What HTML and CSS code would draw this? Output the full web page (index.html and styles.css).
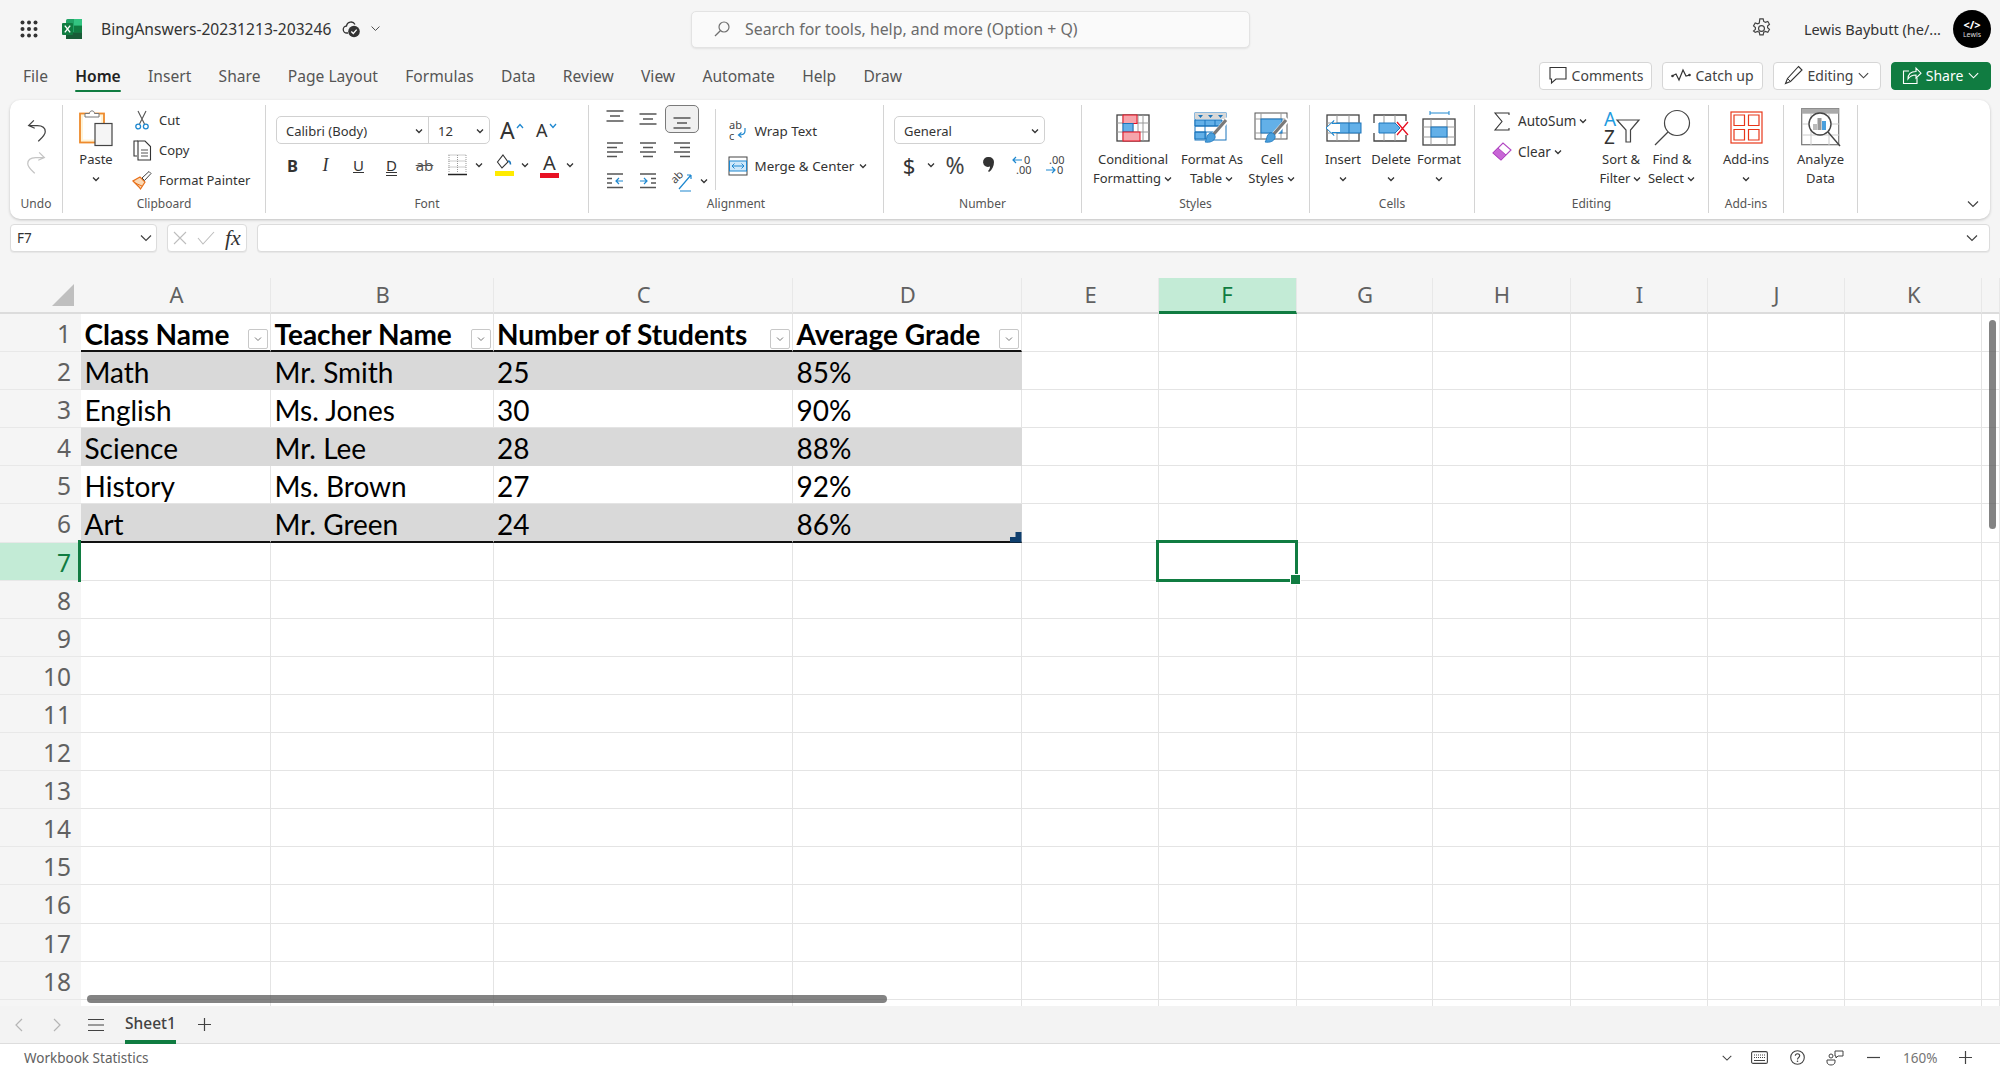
FILE: index.html
```html
<!DOCTYPE html>
<html lang="en">
<head>
<meta charset="utf-8">
<title>BingAnswers-20231213-203246</title>
<link rel="stylesheet" href="styles.css">
</head>
<body>
<svg class="defs" width="0" height="0" aria-hidden="true">
  <symbol id="chev" viewBox="0 0 10 10"><path d="M2 3.5 5 6.5 8 3.5" fill="none" stroke="#333" stroke-width="1.3"/></symbol>
  <symbol id="chevl" viewBox="0 0 14 14"><path d="M2 4.5 7 9.5 12 4.5" fill="none" stroke="#424242" stroke-width="1.2"/></symbol>
  <symbol id="lines3" viewBox="0 0 18 12"><path d="M.5 1H17.5M4 6H14M.5 11H17.5" fill="none" stroke="#555" stroke-width="1.4"/></symbol>
  <symbol id="brush" viewBox="0 0 36 30"><path d="M17 25 34 6" stroke="#fff" stroke-width="5"/><path d="M19 22 32 7" stroke="#7a7a7a" stroke-width="3.2"/><path d="M16 20c3-1 6 2 5 5-1 3-5 5-10 4 2-2 1-7 5-9Z" fill="#4a9fdc" stroke="#1b75bb" stroke-width=".8"/></symbol>
</svg>

<header class="titlebar">
  <div class="title-left">
    <svg class="waffle" width="18" height="18" viewBox="0 0 18 18"><g fill="#333"><circle cx="2.5" cy="2.5" r="2"/><circle cx="9" cy="2.5" r="2"/><circle cx="15.5" cy="2.5" r="2"/><circle cx="2.5" cy="9" r="2"/><circle cx="9" cy="9" r="2"/><circle cx="15.5" cy="9" r="2"/><circle cx="2.5" cy="15.5" r="2"/><circle cx="9" cy="15.5" r="2"/><circle cx="15.5" cy="15.5" r="2"/></g></svg>
    <svg class="xl" width="20" height="20" viewBox="0 0 20 20"><rect x="4" width="16" height="20" rx="1.5" fill="#21a366"/><rect x="12" width="8" height="6.7" fill="#33c481"/><rect x="4" y="13.3" width="16" height="6.7" fill="#185c37"/><rect x="12" y="6.7" width="8" height="6.6" fill="#107c41"/><rect y="4" width="11" height="12" rx="1" fill="#107c41"/><path d="M2.8 6.6 8.2 13.4M8.2 6.6 2.8 13.4" stroke="#fff" stroke-width="1.4"/></svg>
    <span class="doc">BingAnswers-20231213-203246</span>
    <svg class="cloud" width="18" height="18" viewBox="0 0 18 18"><path d="M5 13H4a3.5 3.5 0 0 1-.5-7A4.5 4.5 0 0 1 12 4.5" fill="none" stroke="#333" stroke-width="1.3"/><circle cx="11" cy="11.5" r="5.8" fill="#333"/><path d="M8.3 11.5 10.3 13.5 13.7 9.6" fill="none" stroke="#fff" stroke-width="1.3"/></svg>
    <svg class="doc-chev" width="11" height="11"><use href="#chevl"/></svg>
  </div>
  <div class="search">
    <svg width="18" height="18" viewBox="0 0 18 18"><circle cx="11" cy="7" r="5" fill="none" stroke="#707070" stroke-width="1.2"/><path d="M7.3 10.7 2 16" stroke="#707070" stroke-width="1.3"/></svg>
    <span>Search for tools, help, and more (Option + Q)</span>
  </div>
  <div class="title-right">
    <svg width="21" height="21" viewBox="0 0 20 20"><path d="M8.4 1.5h3.2l.5 2.4 1.6.8 2.3-.9 1.6 2.8-1.8 1.6v1.7l1.8 1.6-1.6 2.8-2.3-.9-1.6.8-.5 2.4H8.4l-.5-2.4-1.6-.8-2.3.9L2.4 13l1.8-1.6V9.7L2.4 8.1 4 5.3l2.3.9 1.6-.8Z" fill="none" stroke="#424242" stroke-width="1.1" transform="translate(0 -.6)"/><circle cx="10" cy="10" r="2.8" fill="none" stroke="#424242" stroke-width="1.1"/></svg>
    <span class="user">Lewis Baybutt (he/...</span>
    <div class="avatar"><span class="av-code">&lt;/&gt;</span><span class="av-name">Lewis</span></div>
  </div>
</header>

<nav class="tabs">
  <span class="tab">File</span>
  <span class="tab active">Home</span>
  <span class="tab">Insert</span>
  <span class="tab">Share</span>
  <span class="tab">Page Layout</span>
  <span class="tab">Formulas</span>
  <span class="tab">Data</span>
  <span class="tab">Review</span>
  <span class="tab">View</span>
  <span class="tab">Automate</span>
  <span class="tab">Help</span>
  <span class="tab">Draw</span>
  <div class="actions">
    <button class="act w-comments"><svg width="20" height="20" viewBox="0 0 20 20"><path d="M2 2.5H18V14H8L3.5 18V14H2Z" fill="none" stroke="#333" stroke-width="1.1"/></svg>Comments</button>
    <button class="act w-catch"><svg width="20" height="14" viewBox="0 0 20 14"><path d="M1 8 5 6 8 12 12 2 15 8 19 7" fill="none" stroke="#333" stroke-width="1.2"/><circle cx="1.5" cy="8" r="1.3" fill="#333"/><circle cx="18.5" cy="7" r="1.3" fill="#333"/></svg>Catch up</button>
    <button class="act w-edit"><svg width="20" height="22" viewBox="0 0 20 20"><path d="M14.5 1.5 18 5 6.5 16.5 1.5 18.5 3.5 13.5Z" fill="none" stroke="#333" stroke-width="1.1"/><path d="M3.5 13.5 6.5 16.5" stroke="#333"/></svg>Editing<svg width="13" height="13"><use href="#chevl"/></svg></button>
    <button class="act share"><svg width="20" height="20" viewBox="0 0 20 20"><path d="M7 6H1.5V18.5H15V13" fill="none" stroke="#fff" stroke-width="1.1"/><path d="M6 14c0-5 3-7.5 8-7.5V3l5 5.2-5 5V10c-3.5 0-6 1-8 4Z" fill="none" stroke="#fff" stroke-width="1.1"/></svg>Share<svg class="white" width="13" height="13" viewBox="0 0 14 14"><path d="M2 4.5 7 9.5 12 4.5" fill="none" stroke="#fff" stroke-width="1.2"/></svg></button>
  </div>
</nav>

<section class="ribbon">
  <div class="group g-undo">
    <div class="body stack">
      <svg width="23" height="28" viewBox="0 0 26 32"><path d="M10 5 4 11 11 14M4 11H14C20 11 23 14 23 18 23 22 18 26 15 29" fill="none" stroke="#424242" stroke-width="1.4"/></svg>
      <svg width="23" height="28" viewBox="0 0 26 32"><path d="M16 5 22 11 15 14M22 11H12C6 11 3 14 3 18 3 22 8 26 11 29" fill="none" stroke="#c4c4c4" stroke-width="1.4"/></svg>
    </div>
    <div class="label">Undo</div>
  </div>

  <div class="group g-clip">
    <div class="body row">
      <div class="big w-paste">
        <div class="big-ico"><svg width="34" height="37" viewBox="0 0 34 37"><rect x="1" y="4.5" width="24" height="29" fill="#fff3d6" stroke="#ee8a2c" stroke-width="1.8"/><rect x="4" y="7.5" width="18" height="23" fill="#fff"/><path d="M6 8V4.5H10.5C10.5 1 15.5 1 15.5 4.5H20V8Z" fill="#fff" stroke="#777"/><rect x="16" y="14.5" width="17" height="22" fill="#f5f5f5" stroke="#444" stroke-width="1.2"/></svg></div>
        <div class="line">Paste</div>
        <div class="line"><svg width="10" height="10"><use href="#chev"/></svg></div>
      </div>
      <div class="smalls">
        <div class="small"><span class="sm-ico"><svg width="14" height="20" viewBox="0 0 14 20"><path d="M3 1 9.5 14M11 1 4.5 14" stroke="#555" stroke-width="1.1"/><circle cx="3.2" cy="16.5" r="2.4" fill="none" stroke="#1e88d0" stroke-width="1.3"/><circle cx="10.8" cy="16.5" r="2.4" fill="none" stroke="#1e88d0" stroke-width="1.3"/></svg></span>Cut</div>
        <div class="small"><span class="sm-ico"><svg width="20" height="21" viewBox="0 0 20 21"><path d="M6 1H2V16H5" fill="none" stroke="#333" stroke-width="1.1"/><path d="M6 20V1H13L18.5 6.5V20Z" fill="#fff" stroke="#333" stroke-width="1.1"/><path d="M9 10H16M9 13H16M9 16H16" stroke="#555"/></svg></span>Copy</div>
        <div class="small"><span class="sm-ico"><svg width="20" height="20" viewBox="0 0 20 20"><path d="M1 11 7 17 8.5 19 13 12 8 7Z" fill="#fbd9b5" stroke="#e8701a" stroke-width="1.2"/><path d="M3 13 10 16" stroke="#e8701a"/><path d="M10 8 17 1.5 19 3.5 12.5 10.5Z" fill="#fff" stroke="#444"/></svg></span>Format Painter</div>
      </div>
    </div>
    <div class="label">Clipboard</div>
  </div>

  <div class="group g-font">
    <div class="body col">
      <div class="tool-row">
        <div class="combo">
          <div class="combo-part w-fname"><span>Calibri (Body)</span><svg width="10" height="10"><use href="#chev"/></svg></div>
          <div class="combo-part w-fsize"><span>12</span><svg width="10" height="10"><use href="#chev"/></svg></div>
        </div>
        <span class="bigA">A<svg width="8" height="6" viewBox="0 0 8 6"><path d="M1 5 4 1.500 7 5" fill="none" stroke="#1e88d0" stroke-width="1.300"/></svg></span>
        <span class="smA">A<svg width="8" height="6" viewBox="0 0 8 6"><path d="M1 1 4 4.500 7 1" fill="none" stroke="#1e88d0" stroke-width="1.300"/></svg></span>
      </div>
      <div class="tool-row second">
        <span class="tool t33 fb">B</span>
        <span class="tool t33 fi">I</span>
        <span class="tool t33 fu">U</span>
        <span class="tool t33 fd">D</span>
        <span class="tool t33 fs">ab</span>
        <span class="tool t32"><svg width="19" height="22" viewBox="0 0 19 22"><path d="M.5 1H18.500M.5 7H18.5M.5 13H18.5M1 1V19M9.500 1V19M18 1V19" fill="none" stroke="#999" stroke-dasharray="1 1"/><path d="M0 20.500H19" stroke="#222" stroke-width="1.500"/></svg></span>
        <span class="tool t12"><svg width="10" height="10"><use href="#chev"/></svg></span>
        <span class="tool t19 ml10"><svg width="19" height="22" viewBox="0 0 19 22"><path d="M8 1 13 8 7 14 2.500 8Z" fill="none" stroke="#333" stroke-width="1.1"/><path d="M13 7c1.500 0 2.500 1.500 2.500 3.500" fill="none" stroke="#1b75bb" stroke-width="1.500"/><rect y="17" width="19" height="5" fill="#ffeb00"/></svg></span>
        <span class="tool t22"><svg width="10" height="10"><use href="#chev"/></svg></span>
        <span class="tool t19 ml4 fa">A<i class="redbar"></i></span>
        <span class="tool t22"><svg width="10" height="10"><use href="#chev"/></svg></span>
      </div>
    </div>
    <div class="label">Font</div>
  </div>

  <div class="group g-align">
    <div class="body row">
      <div class="align-grid">
        <span class="tool ag vtop"><svg width="18" height="12"><use href="#lines3"/></svg></span>
        <span class="tool ag"><svg width="18" height="12"><use href="#lines3"/></svg></span>
        <span class="tool ag sel"><svg width="18" height="12"><use href="#lines3"/></svg></span>
        <span></span>
        <span class="tool ag"><svg width="18" height="16" viewBox="0 0 18 16"><path d="M1 1H17M1 5.500H11M1 10H17M1 14.500H11" stroke="#555" stroke-width="1.400"/></svg></span>
        <span class="tool ag"><svg width="18" height="16" viewBox="0 0 18 16"><path d="M1 1H17M4 5.500H14M1 10H17M4 14.500H14" stroke="#555" stroke-width="1.400"/></svg></span>
        <span class="tool ag"><svg width="18" height="16" viewBox="0 0 18 16"><path d="M1 1H17M7 5.500H17M1 10H17M7 14.500H17" stroke="#555" stroke-width="1.400"/></svg></span>
        <span></span>
        <span class="tool ag"><svg width="18" height="16" viewBox="0 0 18 16"><path d="M1 1H17M1 5.500H6M1 10H6M1 14.500H17" stroke="#555" stroke-width="1.400"/><path d="M17 8H10M13 5 10 8 13 11" fill="none" stroke="#1e88d0" stroke-width="1.200"/></svg></span>
        <span class="tool ag"><svg width="18" height="16" viewBox="0 0 18 16"><path d="M1 1H17M12 5.500H17M12 10H17M1 14.500H17" stroke="#555" stroke-width="1.400"/><path d="M1 8H8M5 5 8 8 5 11" fill="none" stroke="#1e88d0" stroke-width="1.200"/></svg></span>
        <span class="tool ag"><svg width="22" height="24" viewBox="0 0 22 24"><text class="rot" x="0" y="12" transform="rotate(-45 6 9)">ab</text><path d="M8 20 20 6M20 6H16M20 6V10M9 22H20" fill="none" stroke="#1e88d0" stroke-width="1.200"/></svg></span>
        <span class="tool vleft"><svg width="10" height="10"><use href="#chev"/></svg></span>
      </div>
      <div class="wrap-col">
        <div class="small tall"><span class="wm-ico"><svg width="20" height="22" viewBox="0 0 20 22"><text class="wrapt" x="1" y="9">ab</text><text class="wrapt" x="1" y="20">c</text><path d="M17 8V11C17 14 15 15 11 15M13.500 12.500 10.500 15 13.500 17.500" fill="none" stroke="#1e88d0" stroke-width="1.200"/></svg></span>Wrap Text</div>
        <div class="small tall"><span class="wm-ico"><svg width="20" height="20" viewBox="0 0 20 20"><rect x="1" y="1" width="18" height="18" fill="#fff" stroke="#444"/><rect x="1.500" y="5" width="17" height="10" fill="#cfe8fa" stroke="#1e88d0"/><path d="M4 10H16M6.500 7.500 4 10 6.500 12.500M13.500 7.500 16 10 13.500 12.500" fill="none" stroke="#1e88d0"/></svg></span>Merge &amp; Center<svg class="after-wide" width="10" height="10"><use href="#chev"/></svg></div>
      </div>
    </div>
    <div class="label">Alignment</div>
  </div>

  <div class="group g-num">
    <div class="body col">
      <div class="combo w-general"><div class="combo-part grow"><span>General</span><svg width="10" height="10"><use href="#chev"/></svg></div></div>
      <div class="tool-row second">
        <span class="tool t30 dollar">$</span>
        <span class="tool t14"><svg width="10" height="10"><use href="#chev"/></svg></span>
        <span class="tool t34 pct">%</span>
        <span class="tool t34"><svg width="11" height="16" viewBox="0 0 11 16"><path d="M5 0a5 5 0 0 1 5 5c0 4-2 8-5 10l-1-1c1.500-1.500 2-3 2-4.500a5 5 0 1 1-1-9.500Z" fill="#333"/></svg></span>
        <span class="tool t33"><svg width="24" height="20" viewBox="0 0 24 20"><path d="M11 5H2M5 2 2 5 5 8" fill="none" stroke="#1e88d0" stroke-width="1.200"/><text class="dect" x="13" y="9">0</text><text class="dect" x="5" y="19">.00</text></svg></span>
        <span class="tool t33"><svg width="24" height="20" viewBox="0 0 24 20"><text class="dect" x="5" y="9">.00</text><path d="M2 15H11M8 12 11 15 8 18" fill="none" stroke="#1e88d0" stroke-width="1.200"/><text class="dect" x="13" y="19">0</text></svg></span>
      </div>
    </div>
    <div class="label">Number</div>
  </div>

  <div class="group g-styles">
    <div class="body row">
      <div class="big w-cond">
        <div class="big-ico"><svg width="34" height="28" viewBox="0 0 34 28"><rect x="1" y="1" width="32" height="26" fill="#fff" stroke="#444" stroke-width="1.300"/><path d="M7 1V27M17 1V27M22 1V27M27 1V27M1 9H33M1 18H33" stroke="#999"/><rect x="7" y="1" width="14" height="8.500" fill="#f6a4ab" stroke="#e81123"/><rect x="7" y="9.500" width="10" height="8.500" fill="#63b0e8" stroke="#1b75bb"/><rect x="7" y="18" width="17" height="9" fill="#f6a4ab" stroke="#e81123"/></svg></div>
        <div class="line">Conditional</div>
        <div class="line">Formatting<svg class="after" width="10" height="10"><use href="#chev"/></svg></div>
      </div>
      <div class="big w-fmt">
        <div class="big-ico"><svg width="36" height="32" viewBox="0 0 36 32"><rect x="1" y="1" width="31" height="27" fill="#fff" stroke="#1b75bb"/><rect x="1" y="1" width="31" height="6" fill="#d8d8d8"/><path d="M4 3H9L6.500 6ZM14 3H19L16.500 6ZM24 3H29L26.500 6Z" fill="#1b75bb"/><path d="M1 8H28V14H1ZM1 20H12V27H1Z" fill="#63b0e8" stroke="#1b75bb"/><path d="M11 8V27M21 8V14M1 14H28M1 20H22" stroke="#1b75bb"/><use href="#brush"/></svg></div>
        <div class="line">Format As</div>
        <div class="line">Table<svg class="after" width="10" height="10"><use href="#chev"/></svg></div>
      </div>
      <div class="big w-cell">
        <div class="big-ico"><svg width="36" height="32" viewBox="0 0 36 32"><rect x="1" y="1" width="32" height="26" fill="#fff" stroke="#555"/><path d="M7 1V27M27 1V27M1 7H33M1 21H33" stroke="#999"/><rect x="7" y="7" width="21" height="14" fill="#63b0e8" stroke="#1b75bb"/><use href="#brush"/></svg></div>
        <div class="line">Cell</div>
        <div class="line">Styles<svg class="after" width="10" height="10"><use href="#chev"/></svg></div>
      </div>
    </div>
    <div class="label">Styles</div>
  </div>

  <div class="group g-cells">
    <div class="body row">
      <div class="big w48">
        <div class="big-ico"><svg width="38" height="28" viewBox="0 0 38 28"><rect x="3" y="1" width="32" height="26" fill="#fff" stroke="#444" stroke-width="1.300"/><path d="M13 1V27M25 1V27M3 9H35M3 19H35" stroke="#999"/><rect x="13" y="9" width="24" height="10" fill="#63b0e8" stroke="#1b75bb"/><path d="M25 9V19" stroke="#1b75bb"/><path d="M16 9.500H8L10 6.500 2 14 10 21.500 8 18.500H16" fill="#fff" stroke="#1e88d0"/></svg></div>
        <div class="line">Insert</div>
        <div class="line"><svg width="10" height="10"><use href="#chev"/></svg></div>
      </div>
      <div class="big w48">
        <div class="big-ico"><svg width="36" height="28" viewBox="0 0 36 28"><path d="M1 9V1H33V7M1 19V27H33V21" fill="none" stroke="#444" stroke-width="1.300"/><path d="M11 1V9M22 1V9M11 19V27M22 19V27" stroke="#999"/><path d="M6 9H22L27 14 22 19H6Z" fill="#63b0e8" stroke="#1b75bb"/><path d="M24 8 35 21M35 8 24 21" stroke="#e81123" stroke-width="1.300"/></svg></div>
        <div class="line">Delete</div>
        <div class="line"><svg width="10" height="10"><use href="#chev"/></svg></div>
      </div>
      <div class="big w48">
        <div class="big-ico"><svg width="34" height="36" viewBox="0 0 34 36"><path d="M8 3H27M8 1V5M27 1V5" stroke="#1e88d0"/><rect x="1" y="9" width="32" height="26" fill="#fff" stroke="#444" stroke-width="1.300"/><path d="M9 9V35M25 9V35M1 17H33M1 27H33" stroke="#999"/><rect x="9" y="17" width="16" height="10" fill="#63b0e8" stroke="#1b75bb"/></svg></div>
        <div class="line">Format</div>
        <div class="line"><svg width="10" height="10"><use href="#chev"/></svg></div>
      </div>
    </div>
    <div class="label">Cells</div>
  </div>

  <div class="group g-edit">
    <div class="body row">
      <div class="smalls edit-col">
        <div class="small"><span class="ed-ico"><svg width="16" height="19" viewBox="0 0 16 19"><path d="M15 3V1H1L8 9.500 1 18H15V16" fill="none" stroke="#333" stroke-width="1.100"/></svg></span>AutoSum<svg class="after" width="10" height="10"><use href="#chev"/></svg></div>
        <div class="small"><span class="ed-ico"><svg width="20" height="20" viewBox="0 0 20 20"><path d="M1 11 11 1 19 8 9 18Z" fill="#fff" stroke="#b146c2" stroke-width="1.100"/><path d="M1 11 6 6 14 13 9 18Z" fill="#c866d6" stroke="#b146c2"/></svg></span>Clear<svg class="after" width="10" height="10"><use href="#chev"/></svg></div>
      </div>
      <div class="big w-sort">
        <div class="big-ico"><svg width="36" height="36" viewBox="0 0 36 36"><text class="az blue" x="1" y="16">A</text><text class="az" x="1" y="34">Z</text><path d="M14 10H36L27.500 20V32H23V20Z" fill="none" stroke="#444" stroke-width="1.200"/></svg></div>
        <div class="line">Sort &amp;</div>
        <div class="line">Filter<svg class="after" width="10" height="10"><use href="#chev"/></svg></div>
      </div>
      <div class="big w-find">
        <div class="big-ico"><svg width="36" height="36" viewBox="0 0 36 36"><circle cx="23" cy="13" r="12.500" fill="none" stroke="#444" stroke-width="1.200"/><path d="M14 22 1 35" stroke="#444" stroke-width="1.200"/></svg></div>
        <div class="line">Find &amp;</div>
        <div class="line">Select<svg class="after" width="10" height="10"><use href="#chev"/></svg></div>
      </div>
    </div>
    <div class="label">Editing</div>
  </div>

  <div class="group g-add">
    <div class="body row">
      <div class="big w-add">
        <div class="big-ico"><svg width="33" height="33" viewBox="0 0 33 33"><rect x="1" y="1" width="31" height="31" fill="none" stroke="#e8371a" stroke-width="1.200"/><path d="M4 4H14.500V14.500H4ZM18.500 4H29V14.500H18.500ZM4 18.500H14.500V29H4ZM18.500 18.500H29V29H18.500Z" fill="none" stroke="#e8371a" stroke-width="1.200"/></svg></div>
        <div class="line">Add-ins</div>
        <div class="line"><svg width="10" height="10"><use href="#chev"/></svg></div>
      </div>
    </div>
    <div class="label">Add-ins</div>
  </div>

  <div class="group g-ana">
    <div class="body row">
      <div class="big w-ana">
        <div class="big-ico"><svg width="40" height="39" viewBox="0 0 40 39"><rect x=".7" y=".7" width="37" height="36" fill="#fff" stroke="#777" stroke-width="1.200"/><rect x=".7" y=".7" width="37" height="5" fill="#aaa"/><path d="M10 6V37M28 6V37M1 16H38M1 27H38" stroke="#ccc"/><circle cx="19" cy="16" r="11" fill="#fff" stroke="#444" stroke-width="1.400"/><rect x="12" y="16" width="4" height="6" fill="#bbb"/><rect x="16.500" y="10" width="4" height="12" fill="#999"/><rect x="21" y="13" width="4" height="9" fill="#4a9fdc"/><path d="M27 24 39 38" stroke="#444" stroke-width="1.400"/></svg></div>
        <div class="line">Analyze</div>
        <div class="line">Data</div>
      </div>
    </div>
  </div>

  <svg class="collapse" width="14" height="14"><use href="#chevl"/></svg>
</section>

<div class="formula">
  <div class="box namebox"><span>F7</span><svg width="14" height="14"><use href="#chevl"/></svg></div>
  <div class="box fxbox">
    <svg width="14" height="14" viewBox="0 0 14 14"><path d="M1 1 13 13M13 1 1 13" stroke="#bdbdbd" stroke-width="1.100"/></svg>
    <svg width="18" height="14" viewBox="0 0 18 14"><path d="M1 7 6 13 17 1" fill="none" stroke="#bdbdbd" stroke-width="1.100"/></svg>
    <span class="fx">fx</span>
  </div>
  <div class="box fbar"><svg width="14" height="14"><use href="#chevl"/></svg></div>
</div>

<main class="sheet">
  <div class="corner"><svg width="22" height="22" viewBox="0 0 22 22"><path d="M22 0V22H0Z" fill="#bfbfbf"/></svg></div>
  <div class="ch">A</div><div class="ch">B</div><div class="ch">C</div><div class="ch">D</div><div class="ch">E</div><div class="ch sel">F</div><div class="ch">G</div><div class="ch">H</div><div class="ch">I</div><div class="ch">J</div><div class="ch">K</div><div class="ch"></div>

  <div class="rh">1</div>
  <div class="th">Class Name<span class="fbtn"><svg width="10" height="10" viewBox="0 0 10 10"><path d="M2 3.500 5 6.500 8 3.500" fill="none" stroke="#777"/></svg></span></div>
  <div class="th">Teacher Name<span class="fbtn"><svg width="10" height="10" viewBox="0 0 10 10"><path d="M2 3.500 5 6.500 8 3.500" fill="none" stroke="#777"/></svg></span></div>
  <div class="th">Number of Students<span class="fbtn"><svg width="10" height="10" viewBox="0 0 10 10"><path d="M2 3.500 5 6.500 8 3.500" fill="none" stroke="#777"/></svg></span></div>
  <div class="th">Average Grade<span class="fbtn"><svg width="10" height="10" viewBox="0 0 10 10"><path d="M2 3.500 5 6.500 8 3.500" fill="none" stroke="#777"/></svg></span></div>
  <div></div><div></div><div></div><div></div><div></div><div></div><div></div><div></div>

  <div class="rh">2</div><div class="td band">Math</div><div class="td band">Mr. Smith</div><div class="td band">25</div><div class="td band">85%</div>
  <div></div><div></div><div></div><div></div><div></div><div></div><div></div><div></div>
  <div class="rh">3</div><div class="td">English</div><div class="td">Ms. Jones</div><div class="td">30</div><div class="td">90%</div>
  <div></div><div></div><div></div><div></div><div></div><div></div><div></div><div></div>
  <div class="rh">4</div><div class="td band">Science</div><div class="td band">Mr. Lee</div><div class="td band">28</div><div class="td band">88%</div>
  <div></div><div></div><div></div><div></div><div></div><div></div><div></div><div></div>
  <div class="rh">5</div><div class="td">History</div><div class="td">Ms. Brown</div><div class="td">27</div><div class="td">92%</div>
  <div></div><div></div><div></div><div></div><div></div><div></div><div></div><div></div>
  <div class="rh">6</div><div class="td band last">Art</div><div class="td band last">Mr. Green</div><div class="td band last">24</div><div class="td band last">86%<span class="resize"></span></div>
  <div></div><div></div><div></div><div></div><div></div><div></div><div></div><div></div>
  <div class="rh sel">7</div><div></div><div></div><div></div><div></div><div></div><div class="active"><span class="cursor"></span></div><div></div><div></div><div></div><div></div><div></div><div></div>
  <div class="rh">8</div><div></div><div></div><div></div><div></div><div></div><div></div><div></div><div></div><div></div><div></div><div></div><div></div>
  <div class="rh">9</div><div></div><div></div><div></div><div></div><div></div><div></div><div></div><div></div><div></div><div></div><div></div><div></div>
  <div class="rh">10</div><div></div><div></div><div></div><div></div><div></div><div></div><div></div><div></div><div></div><div></div><div></div><div></div>
  <div class="rh">11</div><div></div><div></div><div></div><div></div><div></div><div></div><div></div><div></div><div></div><div></div><div></div><div></div>
  <div class="rh">12</div><div></div><div></div><div></div><div></div><div></div><div></div><div></div><div></div><div></div><div></div><div></div><div></div>
  <div class="rh">13</div><div></div><div></div><div></div><div></div><div></div><div></div><div></div><div></div><div></div><div></div><div></div><div></div>
  <div class="rh">14</div><div></div><div></div><div></div><div></div><div></div><div></div><div></div><div></div><div></div><div></div><div></div><div></div>
  <div class="rh">15</div><div></div><div></div><div></div><div></div><div></div><div></div><div></div><div></div><div></div><div></div><div></div><div></div>
  <div class="rh">16</div><div></div><div></div><div></div><div></div><div></div><div></div><div></div><div></div><div></div><div></div><div></div><div></div>
  <div class="rh">17</div><div></div><div></div><div></div><div></div><div></div><div></div><div></div><div></div><div></div><div></div><div></div><div></div>
  <div class="rh">18</div><div></div><div></div><div></div><div></div><div></div><div></div><div></div><div></div><div></div><div></div><div></div><div></div>
  <div class="rh"></div><div></div><div></div><div></div><div></div><div></div><div></div><div></div><div></div><div></div><div></div><div></div><div></div>
  <span class="vscroll"></span>
  <span class="hscroll"></span>
</main>

<div class="sheetbar">
  <svg class="nav" width="10" height="16" viewBox="0 0 10 16"><path d="M8 2 2 8 8 14" fill="none" stroke="#b5b5b5" stroke-width="1.200"/></svg>
  <svg class="nav" width="10" height="16" viewBox="0 0 10 16"><path d="M2 2 8 8 2 14" fill="none" stroke="#b5b5b5" stroke-width="1.200"/></svg>
  <svg class="menu" width="16" height="14" viewBox="0 0 16 14"><path d="M0 1.500H16M0 7H16M0 12.500H16" stroke="#424242" stroke-width="1.200"/></svg>
  <span class="sheet-tab">Sheet1</span>
  <svg class="plus" width="15" height="15" viewBox="0 0 15 15"><path d="M7.500 1V14M1 7.500H14" stroke="#424242" stroke-width="1.200"/></svg>
</div>

<footer class="status">
  <span class="stats">Workbook Statistics</span>
  <div class="status-right">
    <svg width="12" height="12"><use href="#chevl"/></svg>
    <svg class="s-kb" width="17" height="13" viewBox="0 0 17 13"><rect x=".6" y=".6" width="15.800" height="11.800" rx="1.500" fill="none" stroke="#424242" stroke-width="1.100"/><path d="M3 4H14M3 6.500H14" stroke="#424242" stroke-dasharray="1 1"/><path d="M3 9.500H14" stroke="#424242"/></svg>
    <svg class="s-help" width="15" height="15" viewBox="0 0 15 15"><circle cx="7.500" cy="7.500" r="6.800" fill="none" stroke="#424242" stroke-width="1.100"/><path d="M5.300 5.800C5.300 3 9.700 3 9.700 5.800 9.700 7.500 7.500 7.500 7.500 9.500" fill="none" stroke="#424242" stroke-width="1.100"/><circle cx="7.500" cy="11.300" r=".8" fill="#424242"/></svg>
    <svg class="s-fb" width="18" height="16" viewBox="0 0 18 16"><circle cx="5" cy="6" r="2" fill="none" stroke="#424242"/><path d="M1 10H9V12C9 16 1 16 1 12Z" fill="none" stroke="#424242"/><path d="M9 1H17V6H12L10 8V6H9Z" fill="none" stroke="#424242"/></svg>
    <svg class="s-minus" width="13" height="13" viewBox="0 0 13 13"><path d="M0 6.500H13" stroke="#424242" stroke-width="1.200"/></svg>
    <span class="zoom">160%</span>
    <svg class="s-plus" width="13" height="13" viewBox="0 0 13 13"><path d="M6.500 0V13M0 6.500H13" stroke="#424242" stroke-width="1.200"/></svg>
  </div>
</footer>
</body>
</html>
```

FILE: styles.css
```css
* { box-sizing: border-box; }
html, body { margin: 0; height: 100%; }
body {
  width: 2000px;
  height: 1071px;
  overflow: hidden;
  display: flex;
  flex-direction: column;
  background: #f5f5f5;
  color: #333;
  font-family: "Noto Sans", "Open Sans", sans-serif;
  font-size: 13px;
}
.defs { position: absolute; }
svg { display: block; flex: none; overflow: visible; }
button { font: inherit; color: inherit; }

/* title bar */
.titlebar { height: 57px; display: flex; align-items: center; flex: none; }
.title-left { width: 691px; display: flex; align-items: center; padding-left: 20px; }
.xl { margin-left: 24px; }
.doc { margin-left: 19px; font-size: 15.600px; color: #333; width: 234px; white-space: nowrap; }
.cloud { margin-left: 8px; }
.doc-chev { margin-left: 9px; }
.search {
  width: 559px; height: 37px; margin-top: 1px;
  display: flex; align-items: center; gap: 14px; padding: 0 0 1px 21px;
  background: #fafafa; border: 1px solid #e3e3e3; border-radius: 5px;
  box-shadow: 0 1px 2px rgba(0,0,0,.08);
  font-size: 15.850px; color: #6b6b6b;
}
.title-right { margin-left: auto; display: flex; align-items: center; padding-right: 9px; }
.user { margin-left: 32px; width: 149px; font-size: 14.500px; white-space: nowrap; color: #333; }
.avatar {
  width: 38px; height: 38px; border-radius: 50%; background: #000; color: #fff;
  display: flex; flex-direction: column; align-items: center; justify-content: center;
  line-height: 1;
}
.av-code { font-size: 11px; font-weight: 700; }
.av-name { font-size: 7px; color: #ddd; margin-top: 1px; }

/* tabs */
.tabs { height: 38px; margin-bottom: 5px; flex: none; display: flex; align-items: center; gap: 27.300px; padding: 0 9px 0 23px; }
.tab { position: relative; font-size: 15.600px; color: #555; line-height: 37px; white-space: nowrap; }
.tab.active { color: #222; font-weight: 600; }
.tab.active::after { content: ""; position: absolute; left: 0; right: 0; bottom: 3px; height: 2px; background: #107c41; border-radius: 1px; }
.actions { margin-left: auto; display: flex; gap: 10px; }
.act {
  height: 28px; display: flex; align-items: center; justify-content: center; gap: 4px; padding: 0 0 2px;
  background: #fff; border: 1px solid #d6d6d6; border-radius: 4px; font-size: 14px; color: #424242;
}
.w-comments { width: 113px; }
.w-catch { width: 101px; }
.w-edit { width: 108px; }
.share { width: 100px; background: #107c41; border-color: #107c41; color: #fff; }

/* ribbon */
.ribbon {
  height: 119px; margin: 0 10px; padding-top: 5px; flex: none;
  display: flex; background: #fff; border-radius: 10px;
  box-shadow: 0 1px 3px rgba(0,0,0,.22);
}
.group { height: 108px; display: flex; flex-direction: column; border-right: 1px solid #d4d4d4; flex: none; }
.body { height: 90px; flex: none; }
.label { height: 18px; line-height: 18px; text-align: center; font-size: 12px; color: #555; }
.row { display: flex; }
.col { display: flex; flex-direction: column; }
.stack { display: flex; flex-direction: column; align-items: center; padding-top: 11px; gap: 4px; }

.g-undo { width: 53px; }
.g-clip { width: 203px; }
.g-font { width: 323px; }
.g-align { width: 295px; }
.g-num { width: 198px; }
.g-styles { width: 228px; }
.g-cells { width: 165px; }
.g-edit { width: 234px; }
.g-add { width: 75px; }
.g-ana { width: 74px; }

.big { display: flex; flex-direction: column; align-items: center; flex: none; font-size: 13px; color: #333; }
.big-ico { height: 45px; display: flex; align-items: center; justify-content: center; }
.line { height: 19px; line-height: 19px; display: flex; align-items: center; justify-content: center; white-space: nowrap; }
.after { margin-left: 2px; }
.after-wide { margin-left: 4px; }

.g-clip .body { padding-left: 11px; }
.w-paste { width: 44px; }
.smalls { display: flex; flex-direction: column; margin-left: 12px; }
.small { height: 31px; display: flex; align-items: center; white-space: nowrap; font-size: 13px; color: #333; }
.sm-ico { width: 24px; margin-right: 5px; display: flex; justify-content: center; }

.tool-row { display: flex; align-items: center; }
.tool-row.second { height: 30px; margin-top: 6px; }
.g-font .body, .g-num .body { padding: 11px 0 0 10px; }
.combo { height: 28px; display: flex; border: 1px solid #d1d1d1; border-radius: 5px; font-size: 13px; background: #fff; }
.combo-part { display: flex; align-items: center; justify-content: space-between; padding: 2px 4px 0 9px; }
.w-fname { width: 152px; border-right: 1px solid #d1d1d1; }
.w-fsize { width: 60px; }
.grow { width: 100%; }
.w-general { width: 151px; }
.bigA { width: 34px; margin-left: 10px; font-size: 23px; color: #333; line-height: 28px; display: flex; }
.smA { width: 30px; margin-left: 2px; font-size: 18px; color: #333; line-height: 28px; display: flex; }
.bigA svg, .smA svg { margin: 7px 0 0 1px; }
.tool { display: flex; align-items: center; justify-content: center; flex: none; }
.t33 { width: 33px; } .t32 { width: 32px; } .t30 { width: 30px; } .t34 { width: 34px; }
.t12 { width: 12px; } .t14 { width: 14px; } .t19 { width: 19px; } .t22 { width: 22px; }
.ml10 { margin-left: 10px; } .ml4 { margin-left: 4px; }
.fb { font-weight: 700; font-size: 16.500px; }
.fi { font-style: italic; font-size: 18px; font-family: "Liberation Serif", serif; }
.fu { text-decoration: underline; font-size: 15px; }
.fd { text-decoration: underline double; font-size: 15px; }
.fs { text-decoration: line-through; font-size: 15px; color: #555; }
.fa { position: relative; display: block; height: 26px; text-align: center; font-size: 20px; line-height: 22px; }
.redbar { position: absolute; left: 0; right: 0; bottom: 0; height: 5px; background: #e81123; }

.g-align .body { padding-left: 9px; }
.align-grid { display: grid; grid-template-columns: 33.5px 33.5px 33.5px 14px; grid-auto-rows: 28px; row-gap: 3px; width: 114.500px; }
.ag.vtop { align-items: flex-start; padding-top: 5px; }
.ag.sel { align-items: flex-end; padding-bottom: 3px; background: #f0f0f0; border: 1px solid #7a7a7a; border-radius: 5px; }
.vleft { justify-content: flex-start; }
.wrap-col { margin: 4px 0 0 2px; height: 81px; padding: 4px 0 0 12px; border-left: 1px solid #d4d4d4; }
.small.tall { height: 35px; font-size: 13.400px; padding-left: 0; }
.wm-ico { width: 20px; margin-right: 7px; }
.rot { font: 11px "Noto Sans", sans-serif; fill: #444; }
.wrapt { font: 11px "Noto Sans", sans-serif; fill: #444; }
.dect { font: 11px "Noto Sans", sans-serif; fill: #444; }

.dollar { font-size: 22px; color: #333; }
.pct { font-size: 23px; color: #444; }

.g-styles .body { padding-left: 6px; }
.w-cond { width: 90px; } .w-fmt { width: 68px; } .w-cell { width: 52px; }
.g-cells .body { padding-left: 9px; }
.w48 { width: 48px; }
.edit-col { margin-left: 16px; width: 104px; padding-top: .5px; }
.edit-col .small { font-size: 13.500px; }
.ed-ico { width: 22px; margin-right: 5px; display: flex; justify-content: center; }
.w-sort { width: 52px; } .w-find { width: 50px; }
.az { font: 19px "Noto Sans", sans-serif; fill: #333; }
.az.blue { fill: #1e9be0; }
.w-add { width: 74px; }
.w-ana { width: 73px; }
.collapse { margin: 92px 10px 0 auto; }

/* formula bar */
.formula { height: 28px; margin: 5px 10px 0; display: flex; gap: 10px; flex: none; }
.box { height: 28px; background: #fff; border: 1px solid #dcdcdc; border-radius: 4px; box-shadow: 0 1px 1px rgba(0,0,0,.06); display: flex; align-items: center; }
.namebox { width: 147px; padding: 0 3px 0 6px; justify-content: space-between; font-size: 13.500px; color: #333; }
.fxbox { width: 80px; padding-left: 5px; gap: 10px; }
.fx { font: italic 22px "Liberation Serif", serif; color: #333; }
.fbar { flex: 1; justify-content: flex-end; padding-right: 10px; }

/* sheet */
.sheet {
  position: relative;
  margin-top: 26px; height: 728px; flex: none; overflow: hidden; background: #fff;
  display: grid;
  grid-template-columns: 81px 190px 222.5px 299.5px 228.5px 137px 138px 136px 138px 137px 137px 137.5px 18px;
  grid-template-rows: 36px;
  grid-auto-rows: 38.1px;
  align-content: start;
}
.sheet > div { border-right: 1px solid #e4e4e4; border-bottom: 1px solid #e4e4e4; }
.sheet > .corner { background: #f5f5f5; display: flex; align-items: center; justify-content: flex-end; padding: 0 7px 0 0; border-right: 0; border-bottom: 2px solid #dcdcdc; }
.sheet > .ch {
  background: #f5f5f5; border-bottom: 2px solid #dcdcdc; border-right-color: #e8e8e8;
  font-size: 22px; color: #616161; text-align: center; line-height: 33px; padding-left: 2px;
}
.sheet > .ch.sel { background: #c3ebd6; color: #107c41; position: relative; border-bottom: 3px solid #107c41; padding-left: 0; }
.sheet > .rh {
  background: #f5f5f5; border-right: 0; border-bottom-color: #e8e8e8;
  font-size: 24.500px; color: #616161; text-align: right; padding-right: 10px; line-height: 40px;
}
.sheet > .rh.sel { background: #c3ebd6; color: #107c41; position: relative; }
.rh.sel::after { content: ""; position: absolute; right: 0; top: -3px; bottom: -2px; width: 3px; background: #107c41; }
.th, .td { position: relative; font-family: Lato, "Open Sans", sans-serif; font-size: 28px; color: #000; padding-left: 3.500px; white-space: nowrap; line-height: 41px; }
.th { font-weight: 700; }
.sheet > .th { border-bottom: 2px solid #111; line-height: 40px; }
.sheet > .band { background: #d9d9d9; border-right-color: #d9d9d9; border-bottom-color: #d9d9d9; }
.sheet > .last { border-bottom: 2px solid #111; }
.fbtn { position: absolute; right: 2px; bottom: 1px; width: 20px; height: 20px; background: #fff; border: 1px solid #c8c8c8; border-radius: 2px; display: flex; align-items: center; justify-content: center; }
.resize { position: absolute; right: -1px; bottom: -2px; width: 12px; height: 11px; background: #0f3f6e; clip-path: polygon(50% 0, 100% 0, 100% 100%, 0 100%, 0 50%, 50% 50%); }
.active { position: relative; }
.cursor { position: absolute; left: -3px; right: -2px; top: -3px; bottom: -2px; border: 3px solid #107c41; z-index: 2; }
.cursor::after { content: ""; position: absolute; right: -6px; bottom: -6px; width: 9px; height: 9px; background: #107c41; border: 1px solid #fff; }
.vscroll { position: absolute; left: 1989px; top: 42px; width: 7px; height: 209px; border-radius: 4px; background: rgba(90,90,90,.75); }
.hscroll { position: absolute; left: 87px; top: 717px; width: 800px; height: 8px; border-radius: 4px; background: rgba(90,90,90,.75); }

/* sheet bar */
.sheetbar { height: 38px; flex: none; display: flex; align-items: center; background: #f3f3f3; border-bottom: 1px solid #ddd; padding-left: 14px; }
.nav + .nav { margin-left: 28px; }
.menu { margin-left: 26px; }
.sheet-tab { position: relative; margin-left: 21px; width: 51px; line-height: 34px; height: 38px; font-size: 15.500px; font-weight: 500; color: #424242; white-space: nowrap; }
.sheet-tab::after { content: ""; position: absolute; left: 0; right: 0; bottom: 0; height: 4px; background: #107c41; }
.plus { margin-left: 21px; }

/* status */
.status { flex: 1; display: flex; align-items: center; background: #fff; padding-left: 24px; font-size: 13.500px; color: #616161; }
.status-right { margin-left: auto; display: flex; align-items: center; padding-right: 28px; }
.s-kb { margin-left: 18px; }
.s-help { margin-left: 22px; }
.s-fb { margin-left: 21px; }
.s-minus { margin-left: 23px; }
.zoom { margin-left: 23px; font-size: 13.500px; color: #757575; width: 34px; white-space: nowrap; }
.s-plus { margin-left: 22px; }
```
